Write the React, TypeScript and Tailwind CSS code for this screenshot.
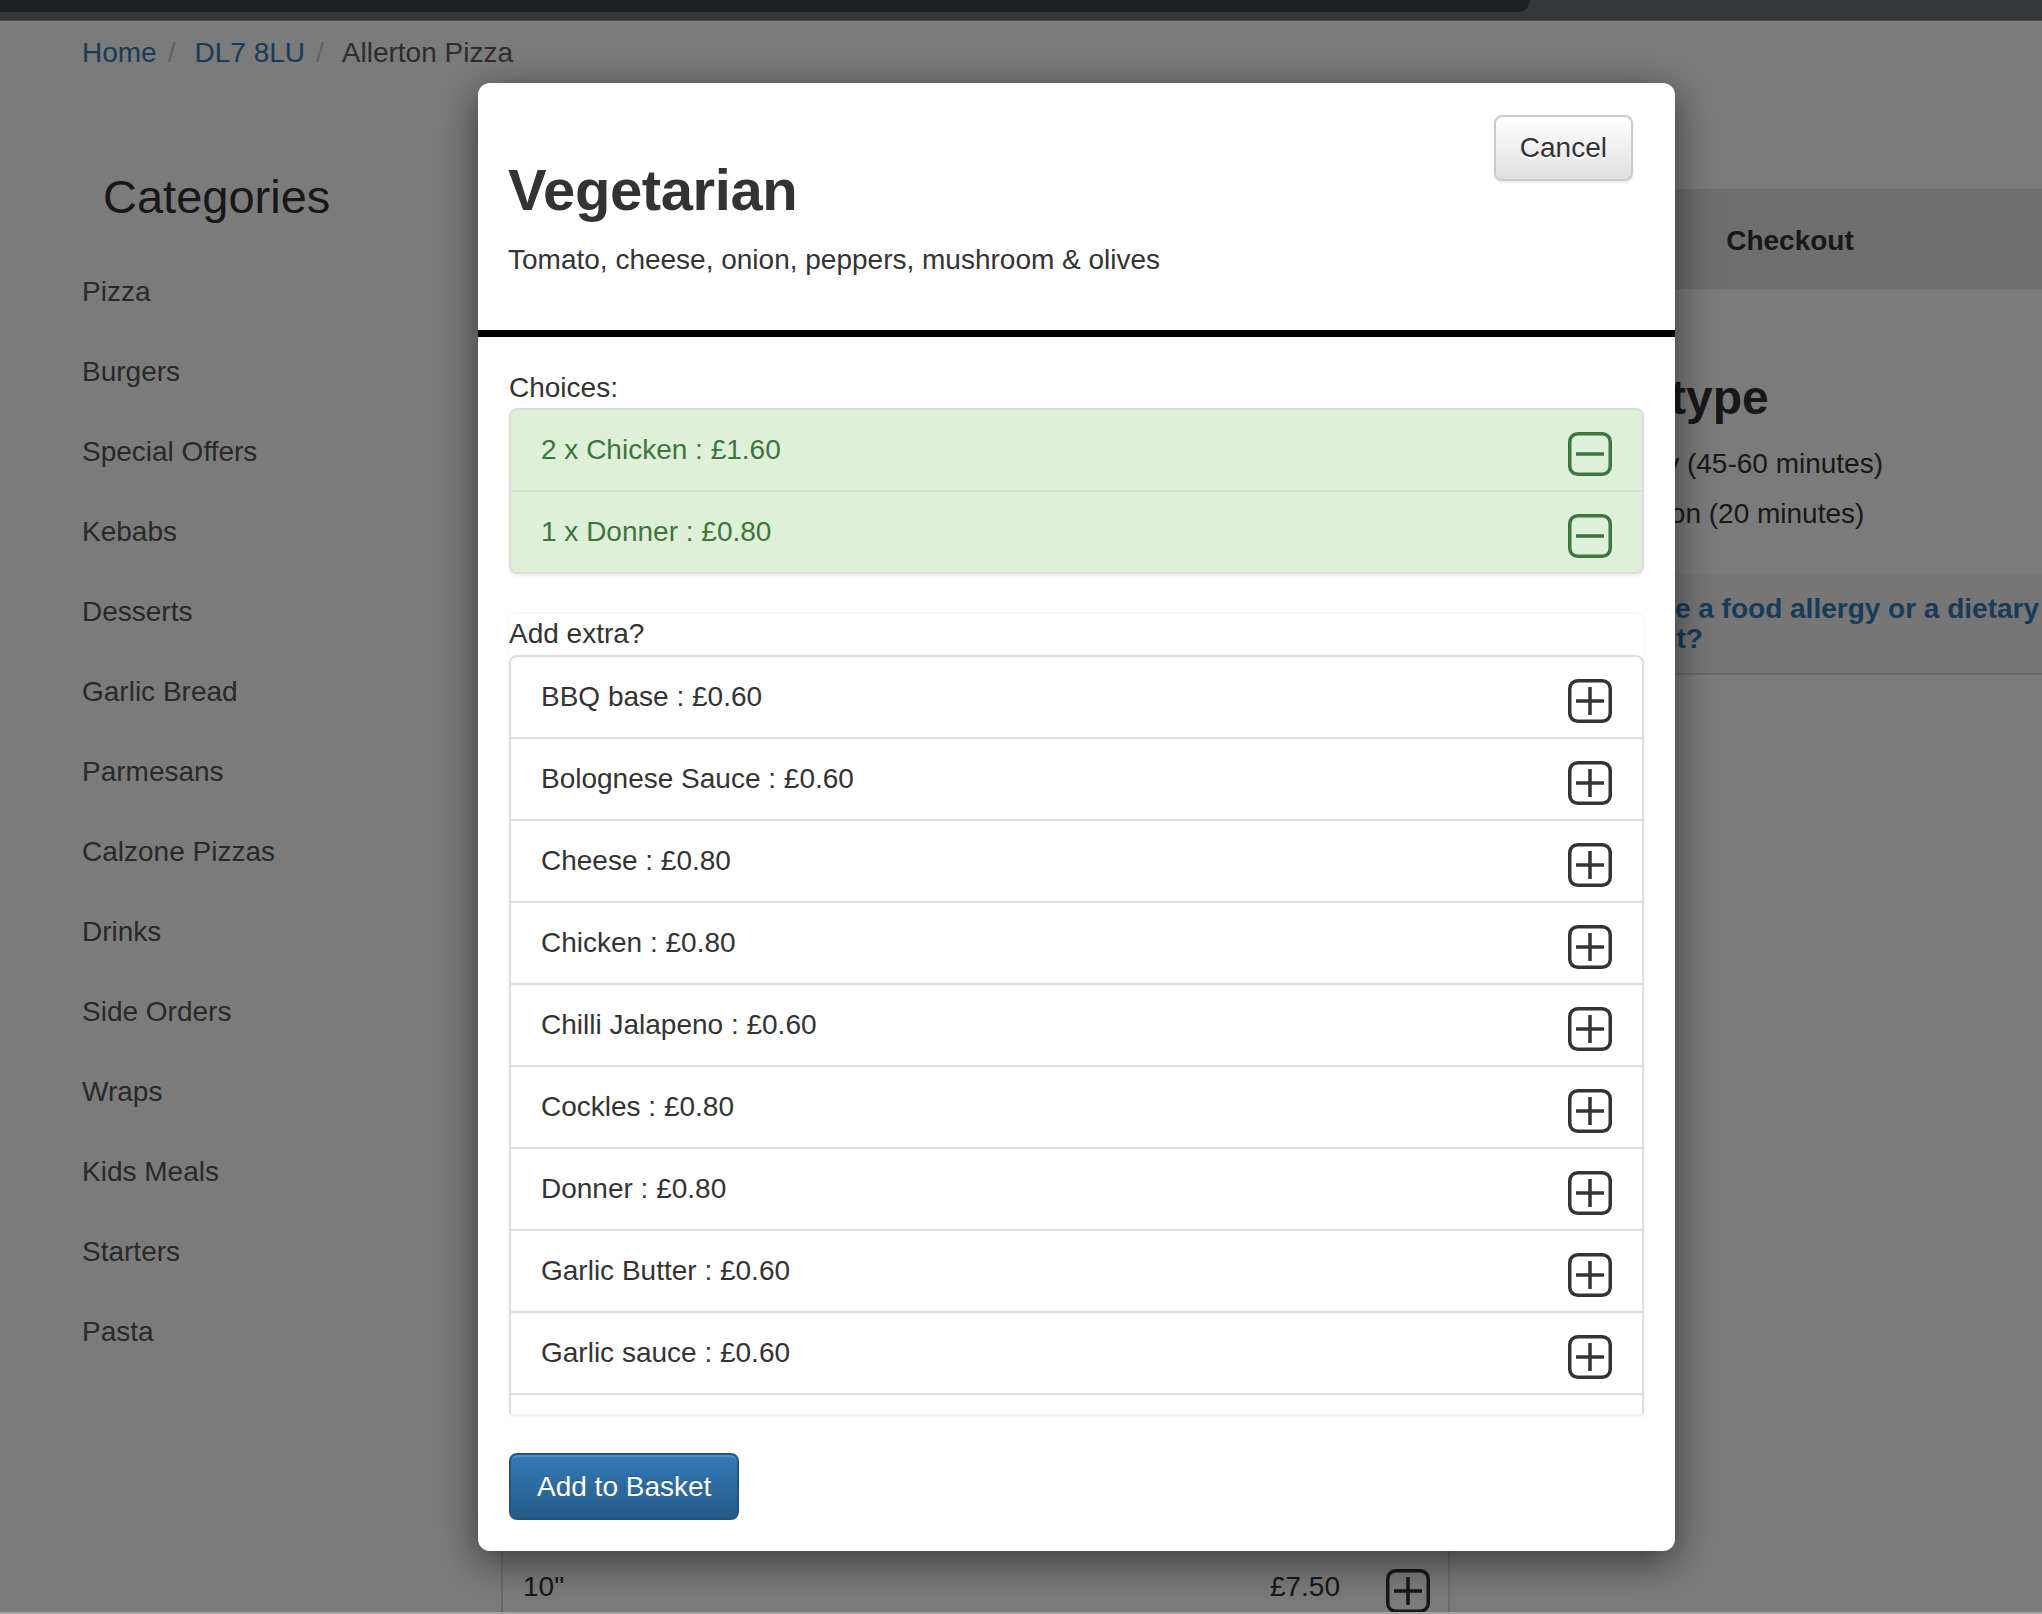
type Item = [string, string];

const categories = [
  "Pizza",
  "Burgers",
  "Special Offers",
  "Kebabs",
  "Desserts",
  "Garlic Bread",
  "Parmesans",
  "Calzone Pizzas",
  "Drinks",
  "Side Orders",
  "Wraps",
  "Kids Meals",
  "Starters",
  "Pasta",
];

const choices: Item[] = [
  ["2 x Chicken", "£1.60"],
  ["1 x Donner", "£0.80"],
];

const extras: Item[] = [
  ["BBQ base", "£0.60"],
  ["Bolognese Sauce", "£0.60"],
  ["Cheese", "£0.80"],
  ["Chicken", "£0.80"],
  ["Chilli Jalapeno", "£0.60"],
  ["Cockles", "£0.80"],
  ["Donner", "£0.80"],
  ["Garlic Butter", "£0.60"],
  ["Garlic sauce", "£0.60"],
  ["Ham", "£0.80"],
  ["Mushroom", "£0.60"],
];

// menu rows sitting behind the modal, only the last one peeks out
const menuRows: Item[] = [
  ['Margherita 10"', "£6.00"],
  ['Margherita 12"', "£7.50"],
  ['Margherita 16"', "£10.50"],
  ['Hawaiian 10"', "£7.00"],
  ['Hawaiian 12"', "£8.50"],
  ['Hawaiian 16"', "£11.50"],
  ['Meat Feast 10"', "£7.50"],
  ['Meat Feast 12"', "£9.00"],
  ['Meat Feast 16"', "£12.50"],
  ['Pepperoni 10"', "£7.00"],
  ['Pepperoni 12"', "£8.50"],
  ['Pepperoni 16"', "£11.50"],
  ['Hot & Spicy 10"', "£7.50"],
  ['Hot & Spicy 12"', "£9.00"],
  ['Hot & Spicy 16"', "£12.50"],
  ["Vegetarian", ""],
  ['7"', "£5.50"],
];

function BoxIcon({ minus = false, className = "" }: { minus?: boolean; className?: string }) {
  return (
    <svg viewBox="0 0 44 44" className={className} fill="none" stroke="currentColor" strokeWidth={3.5}>
      <rect x="1.75" y="1.75" width="40.5" height="40.5" rx="8" />
      <path d="M8 22h28" />
      {!minus && <path d="M22 8v28" />}
    </svg>
  );
}

function Modal() {
  return (
    <div className="absolute left-[478px] top-[62px] w-[1197px] rounded-[12px] bg-white shadow-[0_10px_40px_rgba(0,0,0,0.55)]">
      <div className="flex justify-between border-b-[7px] border-black pl-[30px] pr-[42px] pt-[30px] pb-[50px]">
        <div>
          <h2 className="mt-[45px] text-[58px] leading-[64px] font-bold tracking-[-0.4px] text-[#333]">Vegetarian</h2>
          <p className="mt-[18px]">Tomato, cheese, onion, peppers, mushroom &amp; olives</p>
        </div>
        <button className="mt-[2px] h-[66px] self-start rounded-[8px] border-2 border-[#ccc] bg-[linear-gradient(to_bottom,#ffffff,#e0e0e0)] px-[24px] text-[#333] shadow-[0_2px_2px_rgba(0,0,0,0.08)] [text-shadow:0_2px_0_#fff]">
          Cancel
        </button>
      </div>

      <div className="px-[31px] pt-[31px] pb-[31px]">
        <div>Choices:</div>
        <div className="overflow-hidden rounded-[8px] border-2 border-[#ddd] bg-[#dff0d8] text-[#3c763d] shadow-[0_2px_4px_rgba(0,0,0,0.075)]">
          {choices.map(([name, price]) => (
            <div
              key={name}
              className="flex h-[82px] items-center justify-between border-t-2 border-[#ddd] px-[30px] first:h-[80px] first:border-t-0"
            >
              <span>
                {name} : {price}
              </span>
              <BoxIcon minus className="h-[44px] w-[44px] translate-y-[4px]" />
            </div>
          ))}
        </div>

        <div className="mt-[38px] h-[802px] overflow-hidden rounded-t-[8px] border-t-2 border-[#f7f7f7] shadow-[0_2px_3px_rgba(0,0,0,0.08)]">
          <div className="mb-[1px]">Add extra?</div>
          <div className="overflow-hidden rounded-[8px] border-2 border-[#ddd]">
            {extras.map(([name, price]) => (
              <div
                key={name}
                className="flex h-[82px] items-center justify-between border-t-2 border-[#ddd] px-[30px] first:h-[80px] first:border-t-0"
              >
                <span>
                  {name} : {price}
                </span>
                <BoxIcon className="h-[44px] w-[44px] translate-y-[4px] text-[#333]" />
              </div>
            ))}
          </div>
        </div>

        <button className="mt-[39px] h-[67px] rounded-[8px] border-2 border-[#245580] bg-[linear-gradient(to_bottom,#337ab7,#265a88)] px-[26px] text-white shadow-[inset_0_2px_0_rgba(255,255,255,0.15)] [text-shadow:0_-1px_0_rgba(0,0,0,0.2)]">
          Add to Basket
        </button>
      </div>
    </div>
  );
}

export default function App() {
  return (
    <div className="h-[1614px] w-[2042px] overflow-hidden bg-white font-['Liberation_Sans',Arial,sans-serif]">
      {/* browser chrome */}
      <div className="h-[21px] border-b border-[#505155] bg-[#35363a]">
        <div className="h-[12px] w-[1530px] rounded-br-[12px] bg-[#1f2023]" />
      </div>

      <div className="relative h-[1591px] overflow-hidden bg-white text-[28px] leading-[40px] text-[#333]">
        <nav className="flex pl-[82px] pt-[12px]">
          <a className="text-[#337ab7]">Home</a>
          <span className="ml-[11px] mr-[19px] text-[#ccc]">/</span>
          <a className="text-[#337ab7]">DL7 8LU</a>
          <span className="ml-[11px] mr-[18px] text-[#ccc]">/</span>
          <span className="text-[#5e5e5e]">Allerton Pizza</span>
        </nav>

        <div className="flex">
          <aside className="w-[501px] shrink-0 pl-[82px]">
            <h3 className="ml-[21px] mt-[98px] text-[47px] leading-[51px] text-[#333]">Categories</h3>
            <ul className="mt-[30px]">
              {categories.map((c) => (
                <li key={c} className="py-[20px] text-[#555]">
                  {c}
                </li>
              ))}
            </ul>
          </aside>

          <section className="w-[949px] shrink-0 pt-[78px]">
            {menuRows.map(([name, price]) => (
              <div key={name} className="flex h-[82px] items-center justify-between border-x-2 border-t-2 border-[#ddd] px-[20px]">
                <span>{name}</span>
                <span>{price}</span>
              </div>
            ))}
            <div className="flex h-[82px] items-center border-x-2 border-t-2 border-[#ddd] pl-[20px] pr-[18px]">
              <span className="flex-1">10"</span>
              <span>£7.50</span>
              <BoxIcon className="ml-[46px] h-[44px] w-[44px] translate-y-[4px] text-[#333]" />
            </div>
          </section>

          <section className="ml-[72px] w-[520px] shrink-0">
            <div className="ml-[16px] mt-[116px] flex h-[100px] items-center justify-center bg-[#e4e4e4] pt-[4px] font-bold text-[#333]">
              Checkout
            </div>
            <h3 className="ml-[4px] mt-[82px] text-[48px] leading-[53px] font-bold text-[#333]">Order type</h3>
            <div className="mt-[20px] flex flex-col gap-[10px]">
              <label className="flex items-center gap-[30px]">
                <span className="h-[26px] w-[26px] rounded-full border-2 border-[#999] bg-white" />
                Delivery (45-60 minutes)
              </label>
              <label className="flex items-center gap-[30px]">
                <span className="h-[26px] w-[26px] rounded-full border-2 border-[#999] bg-white" />
                Collection (20 minutes)
              </label>
            </div>
            <div className="mt-[40px] border-b-2 border-[#ddd] bg-[#f5f5f5] pb-[19px] pl-[2px] pt-[20px] leading-[30px] font-bold text-[#337ab7]">
              <span className="whitespace-nowrap">Do you have a food allergy or a dietary</span>
              <br />
              requirement?
            </div>
          </section>
        </div>

        <div className="absolute inset-0 bg-black/[0.518]" />
        <Modal />
      </div>

      <div className="h-[2px] bg-[#a3a3a3]" />
    </div>
  );
}
